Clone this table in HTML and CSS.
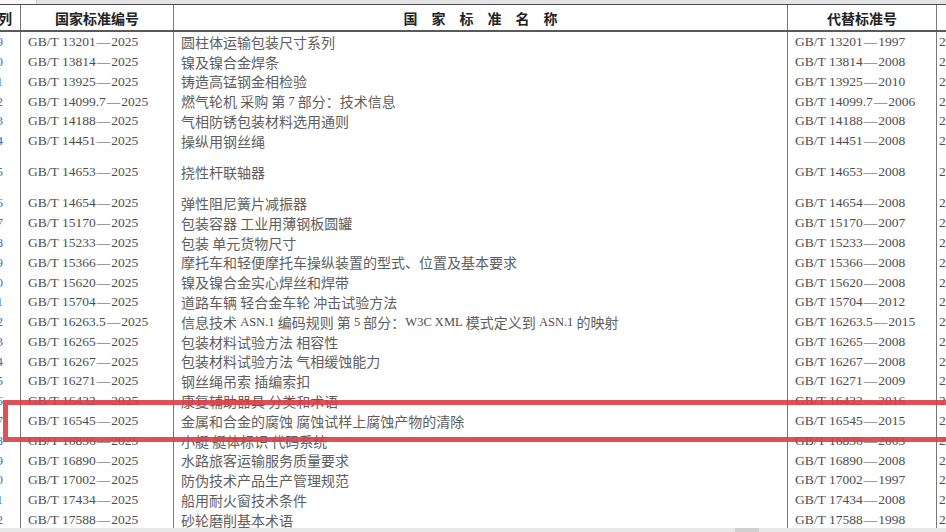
FILE: index.html
```html
<!DOCTYPE html>
<html lang="zh-CN">
<head>
  <meta charset="UTF-8">
  <title>国家标准批准发布公告</title>
  <link rel="stylesheet" href="styles.css">
</head>
<body>
  <div class="topbar"><div class="corner"></div></div>

  <div class="sheet">
    <div class="row head">
      <div class="cell seq"><span>序列</span></div>
      <div class="cell center">国家标准编号</div>
      <div class="cell center"><span class="spaced">国家标准名称</span></div>
      <div class="cell center">代替标准号</div>
      <div class="cell date"></div>
    </div>

    <div class="row">
      <div class="cell seq"><span>209</span></div>
      <div class="cell code">GB/T 13201<span class="dash">—</span>2025</div>
      <div class="cell name">圆柱体运输包装尺寸系列</div>
      <div class="cell code">GB/T 13201<span class="dash">—</span>1997</div>
      <div class="cell date"><span>2026-05-01</span></div>
    </div>
    <div class="row">
      <div class="cell seq"><span>210</span></div>
      <div class="cell code">GB/T 13814<span class="dash">—</span>2025</div>
      <div class="cell name">镍及镍合金焊条</div>
      <div class="cell code">GB/T 13814<span class="dash">—</span>2008</div>
      <div class="cell date"><span>2026-05-01</span></div>
    </div>
    <div class="row">
      <div class="cell seq"><span>211</span></div>
      <div class="cell code">GB/T 13925<span class="dash">—</span>2025</div>
      <div class="cell name">铸造高锰钢金相检验</div>
      <div class="cell code">GB/T 13925<span class="dash">—</span>2010</div>
      <div class="cell date"><span>2026-05-01</span></div>
    </div>
    <div class="row">
      <div class="cell seq"><span>212</span></div>
      <div class="cell code">GB/T 14099.7<span class="dash">—</span>2025</div>
      <div class="cell name">燃气轮机 采购 第 <span class="lat">7</span> 部分：技术信息</div>
      <div class="cell code">GB/T 14099.7<span class="dash">—</span>2006</div>
      <div class="cell date"><span>2026-05-01</span></div>
    </div>
    <div class="row">
      <div class="cell seq"><span>213</span></div>
      <div class="cell code">GB/T 14188<span class="dash">—</span>2025</div>
      <div class="cell name">气相防锈包装材料选用通则</div>
      <div class="cell code">GB/T 14188<span class="dash">—</span>2008</div>
      <div class="cell date"><span>2026-05-01</span></div>
    </div>
    <div class="row">
      <div class="cell seq"><span>214</span></div>
      <div class="cell code">GB/T 14451<span class="dash">—</span>2025</div>
      <div class="cell name">操纵用钢丝绳</div>
      <div class="cell code">GB/T 14451<span class="dash">—</span>2008</div>
      <div class="cell date"><span>2026-05-01</span></div>
    </div>
    <div class="row tall">
      <div class="cell seq"><span>215</span></div>
      <div class="cell code">GB/T 14653<span class="dash">—</span>2025</div>
      <div class="cell name">挠性杆联轴器</div>
      <div class="cell code">GB/T 14653<span class="dash">—</span>2008</div>
      <div class="cell date"><span>2026-05-01</span></div>
    </div>
    <div class="row">
      <div class="cell seq"><span>216</span></div>
      <div class="cell code">GB/T 14654<span class="dash">—</span>2025</div>
      <div class="cell name">弹性阻尼簧片减振器</div>
      <div class="cell code">GB/T 14654<span class="dash">—</span>2008</div>
      <div class="cell date"><span>2026-05-01</span></div>
    </div>
    <div class="row">
      <div class="cell seq"><span>217</span></div>
      <div class="cell code">GB/T 15170<span class="dash">—</span>2025</div>
      <div class="cell name">包装容器 工业用薄钢板圆罐</div>
      <div class="cell code">GB/T 15170<span class="dash">—</span>2007</div>
      <div class="cell date"><span>2026-05-01</span></div>
    </div>
    <div class="row">
      <div class="cell seq"><span>218</span></div>
      <div class="cell code">GB/T 15233<span class="dash">—</span>2025</div>
      <div class="cell name">包装 单元货物尺寸</div>
      <div class="cell code">GB/T 15233<span class="dash">—</span>2008</div>
      <div class="cell date"><span>2026-05-01</span></div>
    </div>
    <div class="row">
      <div class="cell seq"><span>219</span></div>
      <div class="cell code">GB/T 15366<span class="dash">—</span>2025</div>
      <div class="cell name">摩托车和轻便摩托车操纵装置的型式、位置及基本要求</div>
      <div class="cell code">GB/T 15366<span class="dash">—</span>2008</div>
      <div class="cell date"><span>2026-05-01</span></div>
    </div>
    <div class="row">
      <div class="cell seq"><span>220</span></div>
      <div class="cell code">GB/T 15620<span class="dash">—</span>2025</div>
      <div class="cell name">镍及镍合金实心焊丝和焊带</div>
      <div class="cell code">GB/T 15620<span class="dash">—</span>2008</div>
      <div class="cell date"><span>2026-05-01</span></div>
    </div>
    <div class="row">
      <div class="cell seq"><span>221</span></div>
      <div class="cell code">GB/T 15704<span class="dash">—</span>2025</div>
      <div class="cell name">道路车辆 轻合金车轮 冲击试验方法</div>
      <div class="cell code">GB/T 15704<span class="dash">—</span>2012</div>
      <div class="cell date"><span>2026-05-01</span></div>
    </div>
    <div class="row">
      <div class="cell seq"><span>222</span></div>
      <div class="cell code">GB/T 16263.5<span class="dash">—</span>2025</div>
      <div class="cell name">信息技术 <span class="lat">ASN.1</span> 编码规则 第 <span class="lat">5</span> 部分：<span class="lat">W3C XML</span> 模式定义到 <span class="lat">ASN.1</span> 的映射</div>
      <div class="cell code">GB/T 16263.5<span class="dash">—</span>2015</div>
      <div class="cell date"><span>2026-05-01</span></div>
    </div>
    <div class="row">
      <div class="cell seq"><span>223</span></div>
      <div class="cell code">GB/T 16265<span class="dash">—</span>2025</div>
      <div class="cell name">包装材料试验方法 相容性</div>
      <div class="cell code">GB/T 16265<span class="dash">—</span>2008</div>
      <div class="cell date"><span>2026-05-01</span></div>
    </div>
    <div class="row">
      <div class="cell seq"><span>224</span></div>
      <div class="cell code">GB/T 16267<span class="dash">—</span>2025</div>
      <div class="cell name">包装材料试验方法 气相缓蚀能力</div>
      <div class="cell code">GB/T 16267<span class="dash">—</span>2008</div>
      <div class="cell date"><span>2026-05-01</span></div>
    </div>
    <div class="row">
      <div class="cell seq"><span>225</span></div>
      <div class="cell code">GB/T 16271<span class="dash">—</span>2025</div>
      <div class="cell name">钢丝绳吊索 插编索扣</div>
      <div class="cell code">GB/T 16271<span class="dash">—</span>2009</div>
      <div class="cell date"><span>2026-05-01</span></div>
    </div>
    <div class="row">
      <div class="cell seq"><span>226</span></div>
      <div class="cell code">GB/T 16432<span class="dash">—</span>2025</div>
      <div class="cell name">康复辅助器具 分类和术语</div>
      <div class="cell code">GB/T 16432<span class="dash">—</span>2016</div>
      <div class="cell date"><span>2026-05-01</span></div>
    </div>
    <div class="row">
      <div class="cell seq"><span>227</span></div>
      <div class="cell code">GB/T 16545<span class="dash">—</span>2025</div>
      <div class="cell name">金属和合金的腐蚀 腐蚀试样上腐蚀产物的清除</div>
      <div class="cell code">GB/T 16545<span class="dash">—</span>2015</div>
      <div class="cell date"><span>2026-05-01</span></div>
    </div>
    <div class="row">
      <div class="cell seq"><span>228</span></div>
      <div class="cell code">GB/T 16836<span class="dash">—</span>2025</div>
      <div class="cell name">小艇 艇体标识 代码系统</div>
      <div class="cell code">GB/T 16836<span class="dash">—</span>2003</div>
      <div class="cell date"><span>2026-05-01</span></div>
    </div>
    <div class="row">
      <div class="cell seq"><span>229</span></div>
      <div class="cell code">GB/T 16890<span class="dash">—</span>2025</div>
      <div class="cell name">水路旅客运输服务质量要求</div>
      <div class="cell code">GB/T 16890<span class="dash">—</span>2008</div>
      <div class="cell date"><span>2026-05-01</span></div>
    </div>
    <div class="row">
      <div class="cell seq"><span>230</span></div>
      <div class="cell code">GB/T 17002<span class="dash">—</span>2025</div>
      <div class="cell name">防伪技术产品生产管理规范</div>
      <div class="cell code">GB/T 17002<span class="dash">—</span>1997</div>
      <div class="cell date"><span>2026-05-01</span></div>
    </div>
    <div class="row">
      <div class="cell seq"><span>231</span></div>
      <div class="cell code">GB/T 17434<span class="dash">—</span>2025</div>
      <div class="cell name">船用耐火窗技术条件</div>
      <div class="cell code">GB/T 17434<span class="dash">—</span>2008</div>
      <div class="cell date"><span>2026-05-01</span></div>
    </div>
    <div class="row">
      <div class="cell seq"><span>232</span></div>
      <div class="cell code">GB/T 17588<span class="dash">—</span>2025</div>
      <div class="cell name">砂轮磨削基本术语</div>
      <div class="cell code">GB/T 17588<span class="dash">—</span>1998</div>
      <div class="cell date"><span>2026-05-01</span></div>
    </div>
  </div>

  <!-- highlight drawn over the 16545 row -->
  <div class="mark"></div>

  <div class="hscroll"><div class="thumb"></div></div>
</body>
</html>
```

FILE: styles.css
```css
body {
  margin: 0;
  background-color: #fff;
  overflow: hidden;
  font-family: "Noto Sans CJK SC", sans-serif;
  font-size: 14px;
  color: #555;
}

.topbar {
  display: flex;
  height: 4px;
  background-color: #e4e4e4;
}

.topbar .corner {
  width: 36px;
  background-color: #f8f8f8;
  border-right: 1px solid #d2d2d2;
}

.sheet {
  width: 960px;
}

.row {
  display: grid;
  grid-template-columns: 20px 153px 614px 149px 24px;
  height: 19.8px;
}

.row.tall {
  height: 42.4px;
}

.head {
  box-sizing: border-box;
  height: 28px;
  border-top: 1px solid #4a4a4a;
  border-bottom: 2px solid #5a5a5a;
  font-weight: bold;
  color: #222;
}

.cell {
  display: flex;
  align-items: center;
  overflow: hidden;
  white-space: pre;
  line-height: 1;
  border-left: 1px solid #777;
}

.cell.seq {
  border-left: none;
  justify-content: flex-end;
  padding-right: 17px;
  color: #3f73c6;
  font-family: "Liberation Serif", serif;
  font-size: 13.5px;
}

.head .cell.seq {
  padding-right: 8px;
  color: #222;
  font-family: "Noto Sans CJK SC", sans-serif;
  font-size: 14px;
}

.cell.center {
  justify-content: center;
}

.spaced {
  letter-spacing: 14px;
  padding-left: 14px;
}

.cell.code {
  padding-left: 7px;
  font-family: "Liberation Serif", serif;
  font-size: 13.5px;
  color: #4e4e4e;
}

.dash {
  margin: 0 1px;
}

.cell.name {
  padding-left: 7px;
  color: #5e5e5e;
}

.lat {
  font-family: "Liberation Serif", serif;
  font-size: 12.5px;
  color: #4e4e4e;
}

.cell.date {
  padding-left: 2px;
  font-family: "Liberation Serif", serif;
  font-size: 13.5px;
  color: #4e4e4e;
}

.mark {
  position: absolute;
  top: 400px;
  left: 3px;
  width: 980px;
  height: 42px;
  box-sizing: border-box;
  border: 5px solid rgba(218, 62, 70, 0.9);
}

.hscroll {
  position: fixed;
  left: 0;
  right: 0;
  bottom: 0;
  height: 4px;
  background-color: #e8e8e8;
}

.hscroll .thumb {
  margin-left: 735px;
  width: 24px;
  height: 4px;
  background-color: #cfcfcf;
}
```
